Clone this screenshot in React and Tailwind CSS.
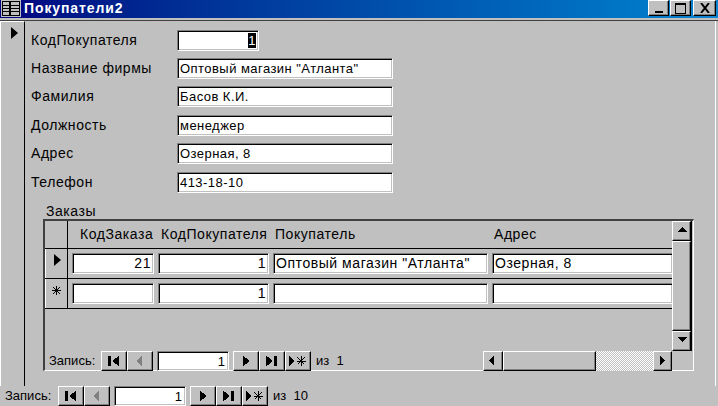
import React from 'react';

const raised = "bg-[#c0c0c0] border border-t-white border-l-white border-r-black border-b-black shadow-[inset_-1px_-1px_0_#808080]";
const sunken = "border border-t-[#808080] border-l-[#808080] border-r-white border-b-white shadow-[inset_1px_1px_0_#000,inset_-1px_-1px_0_#c0c0c0]";
const big = "text-[14px] tracking-[0.55px]";

function Glyph({ type, disabled }) {
  const c = disabled ? "#808080" : "#000";
  return (
    <svg width="18" height="12" viewBox="0 0 18 12" fill={c} shapeRendering="crispEdges">
      {type === "first" && <><rect x="3" y="1" width="3" height="10" /><polygon points="14,0.5 14,11.5 7.5,6" /></>}
      {type === "prev" && <polygon points="11,0.5 11,11.5 5,6" />}
      {type === "next" && <polygon points="6,0.5 6,11.5 12.5,6" />}
      {type === "last" && <><polygon points="3,0.5 3,11.5 10,6" /><rect x="11" y="1" width="3" height="10" /></>}
      {type === "new" && <>
        <polygon points="0,0.5 0,11.5 6,6" />
        <path d="M12 1v10M7.5 6h9M8.5 2.5l7 7M15.5 2.5l-7 7" stroke="#000" strokeWidth="1" fill="none" />
      </>}
    </svg>
  );
}

function NavBtn({ type, disabled }) {
  return (
    <div className={`${raised} h-[20px] w-[26px] flex items-center justify-center`}>
      <Glyph type={type} disabled={disabled} />
    </div>
  );
}

function Nav({ total, labelW }) {
  return (
    <div className="flex items-center h-[20px] tracking-normal">
      <span className="mr-[4px]" style={{ width: labelW }}>Запись:</span>
      <NavBtn type="first" />
      <NavBtn type="prev" disabled />
      <div className={`${sunken} bg-white w-[72px] h-[20px] mx-[4px] text-right pr-[3px] leading-[20px]`}>1</div>
      <NavBtn type="next" />
      <NavBtn type="last" />
      <NavBtn type="new" />
      <span className="ml-[5px] whitespace-pre">из  {total}</span>
    </div>
  );
}

function Field({ children, className }) {
  return (
    <div className={`${sunken} bg-white h-[21px] px-[2px] leading-[19px] whitespace-nowrap overflow-hidden ${className}`}>
      {children}
    </div>
  );
}

function Arrow({ dir }) {
  const pts = {
    up: "1,7 11,7 6,2",
    down: "1,2 11,2 6,7",
    left: "7,0 7,11 2,5.5",
    right: "3,0 3,11 8,5.5",
  };
  return (
    <svg width="12" height="11" viewBox="0 0 12 11" fill="#000" shapeRendering="crispEdges">
      <polygon points={pts[dir]} />
    </svg>
  );
}

const fields = [
  ["Название фирмы", 'Оптовый магазин "Атланта"'],
  ["Фамилия", "Басов К.И."],
  ["Должность", "менеджер"],
  ["Адрес", "Озерная, 8"],
  ["Телефон", "413-18-10"],
];

const columns = [
  { name: "КодЗаказа", w: "w-[82px]" },
  { name: "КодПокупателя", w: "w-[111px]" },
  { name: "Покупатель", w: "w-[215px]" },
  { name: "Адрес", w: "w-[181px]" },
];

function Row({ marker, values }) {
  return (
    <div className="flex h-[30px] border-b border-black">
      <div className="w-[23px] shrink-0 border-r border-black flex items-center justify-center border-l border-l-white">
        {marker === "current" ? (
          <svg width="10" height="12" viewBox="0 0 10 12" fill="#000" className="mb-[6px]"><polygon points="2,0 2,12 9,6" /></svg>
        ) : (
          <svg width="9" height="9" viewBox="0 0 9 9" stroke="#000" fill="none" className="mb-[6px]" shapeRendering="crispEdges"><path d="M4.5 0v9M0 4.5h9M1 1l7 7M8 1l-7 7" /></svg>
        )}
      </div>
      <div className={`flex gap-[4px] pl-[4px] pt-[4px] overflow-hidden ${big}`}>
        {columns.map((c, i) => (
          <Field key={c.name} className={`${c.w} shrink-0 ${i < 2 ? "text-right" : ""}`}>{values[i]}</Field>
        ))}
      </div>
    </div>
  );
}

export default function App() {
  return (
    <div className="w-[718px] h-[406px] overflow-hidden bg-[#c0c0c0] text-black text-[13px] tracking-[0.45px] flex flex-col" style={{ fontFamily: '"Liberation Sans", Arial, sans-serif' }}>
      {/* title bar */}
      <div className="h-[18px] shrink-0 flex items-start bg-gradient-to-r from-[#000080] to-[#1084d0] pr-[2px]">
        <svg width="20" height="17" viewBox="0 0 20 17" className="ml-[1px] mr-[3px] shrink-0" shapeRendering="crispEdges">
          <rect x="0" y="0" width="20" height="17" fill="#c0c0c0" />
          <path d="M1.5 1.5h7v14h-7zM9.5 1.5h9v14h-9zM1.5 5.5h17M1.5 8.5h17M1.5 11.5h17" stroke="#000" fill="none" />
        </svg>
        <span className="text-white font-bold text-[14px] tracking-[0.9px] leading-[17px]">Покупатели2</span>
        <div className="ml-auto flex items-start">
          <div className={`${raised} w-[21px] h-[16px] mr-[1px] flex items-end justify-center pb-[2px]`}><div className="w-[8px] h-[2px] bg-black" /></div>
          <div className={`${raised} w-[21px] h-[16px] flex items-center justify-center`}><div className="w-[11px] h-[11px] border border-black border-t-2" /></div>
          <div className={`${raised} w-[23px] h-[16px] ml-[2px] flex items-center justify-center`}>
            <svg width="10" height="10" viewBox="0 0 10 10" stroke="#000" strokeWidth="2"><path d="M1 0l8 10M9 0l-8 10" /></svg>
          </div>
        </div>
      </div>
      <div className="h-[3px] shrink-0 border-b border-[#404040] bg-[#c0c0c0]" />

      {/* form body */}
      <div className="flex h-[365px] shrink-0">
        <div className="w-[25px] shrink-0 border-r border-black border-l border-l-white border-t border-t-white pt-[5px] pl-[9px]">
          <svg width="9" height="12" viewBox="0 0 9 12" fill="#000"><polygon points="1,0 1,12 8,6" /></svg>
        </div>
        <div className="flex-1 pl-[6px] flex flex-col border-r border-r-white mr-[2px]">
          <div className="flex items-center h-[28px] mt-[5px]">
            <span className={`w-[146px] ${big}`}>КодПокупателя</span>
            <Field className="w-[82px] text-right">
              <span className="bg-black text-white">1</span>
            </Field>
          </div>
          {fields.map(([label, value]) => (
            <div key={label} className="flex items-center h-[28.5px]">
              <span className={`w-[146px] whitespace-nowrap ${big}`}>{label}</span>
              <Field className="w-[216px]">{value}</Field>
            </div>
          ))}

          {/* subform */}
          <div className={`ml-[15px] mt-[6px] h-[16px] leading-[16px] ${big}`}>Заказы</div>
          <div className="ml-[12px] w-[651px] h-[152px] flex flex-col border border-t-[#404040] border-l-[#404040] border-r-white border-b-white border-t-2 border-l-2">
            <div className="flex h-[130px] shrink-0">
              <div className="flex-1 min-w-0 overflow-hidden">
                <div className="flex h-[28px] border-b border-black">
                  <div className="w-[23px] shrink-0 border-r border-black" />
                  <div className={`flex gap-[4px] pl-[4px] pt-[3px] ${big}`}>
                    {columns.map((c, i) => (
                      <div key={c.name} className={`${c.w} shrink-0 ${i === 0 ? "pl-[8px]" : i === 1 ? "pl-[3px]" : "pl-[2px]"} leading-[20px] whitespace-nowrap`}>{c.name}</div>
                    ))}
                  </div>
                </div>
                <Row marker="current" values={["21", "1", 'Оптовый магазин "Атланта"', "Озерная, 8"]} />
                <Row marker="new" values={["", "1", "", ""]} />
              </div>
              <div className="w-[20px] mr-[1px] shrink-0 flex flex-col border-r border-black">
                <div className={`${raised} h-[20px] flex items-center justify-center`}><Arrow dir="up" /></div>
                <div className={`${raised} flex-1`} />
                <div className={`${raised} h-[20px] flex items-center justify-center`}><Arrow dir="down" /></div>
              </div>
            </div>
            <div className="flex h-[20px] shrink-0">
              <div className="flex-1 pl-[4px]"><Nav total="1" labelW={48} /></div>
              <div className="flex w-[189px] shrink-0 h-[20px]">
                <div className={`${raised} w-[20px] flex items-center justify-center`}><Arrow dir="left" /></div>
                <div className={`${raised} w-[93px]`} />
                <div className="flex-1 bg-[repeating-conic-gradient(#fff_0_25%,#c0c0c0_0_50%)] bg-[length:2px_2px]" />
                <div className={`${raised} w-[19px] flex items-center justify-center`}><Arrow dir="right" /></div>
              </div>
              <div className="w-[21px] shrink-0" />
            </div>
          </div>
        </div>
      </div>

      {/* bottom record bar */}
      <div className="pl-[5px]"><Nav total="10" labelW={49} /></div>
    </div>
  );
}
